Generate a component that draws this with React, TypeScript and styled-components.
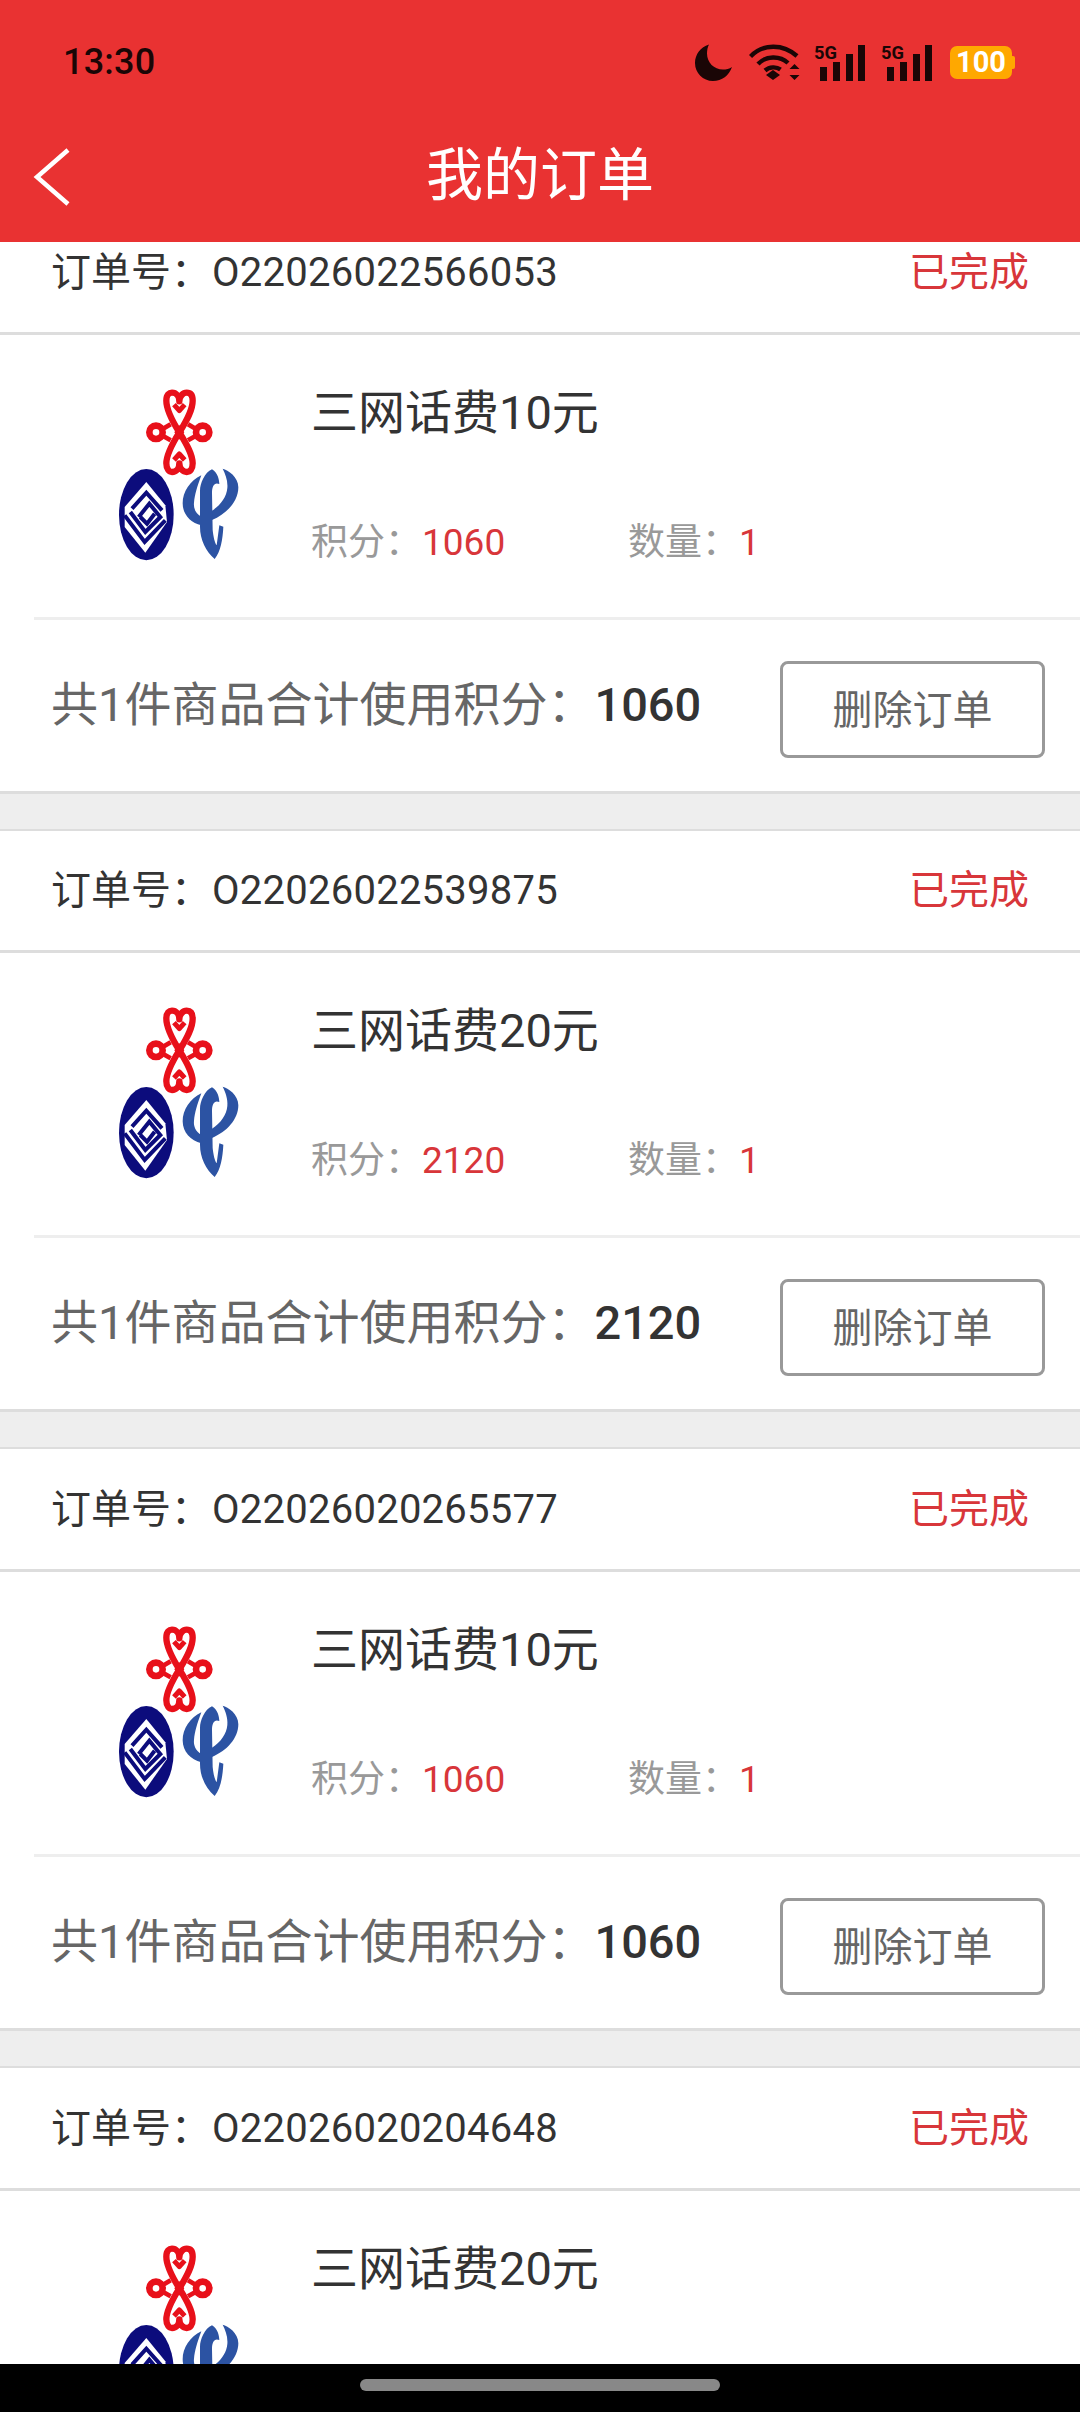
import styled, { createGlobalStyle } from "styled-components";

const GlobalStyle = createGlobalStyle`
  html, body {
    margin: 0;
    padding: 0;
    background: #eee;
  }
  * {
    box-sizing: border-box;
  }
`;

const FONT = `Roboto, "Noto Sans CJK SC", sans-serif`;
const RED = "#d8363a";

const Page = styled.div`
  width: 1080px;
  height: 2412px;
  display: flex;
  flex-direction: column;
  overflow: hidden;
  font-family: ${FONT};
  background: #eee;
`;

const Header = styled.header`
  height: 242px;
  flex-shrink: 0;
  background: #e93232;
  display: flex;
  flex-direction: column;
  position: relative;
  z-index: 1;
`;

const StatusBar = styled.div`
  height: 124px;
  padding: 0 68px 0 63px;
  display: flex;
  align-items: center;
  justify-content: space-between;
`;

const Time = styled.span`
  font-size: 36px;
  font-weight: 500;
  color: #1a0606;
  letter-spacing: 0.2px;
`;

const StatusIcons = styled.div`
  display: flex;
  align-items: center;
`;

const NavBar = styled.div`
  height: 118px;
  display: flex;
  align-items: center;
  justify-content: center;
  position: relative;
`;

const BackIcon = styled.svg`
  position: absolute;
  left: 31px;
  top: 22px;
`;

const Title = styled.h1`
  margin: 0 0 26px;
  font-size: 57px;
  font-weight: 400;
  color: #fff;
`;

const Viewport = styled.main`
  flex: 1;
  overflow: hidden;
`;

const OrderList = styled.div`
  margin-top: -32px;
`;

const OrderCard = styled.section`
  background: #fff;
  border-top: 2px solid #ddd;
  border-bottom: 3px solid #ddd;
  margin-bottom: 35.2px;
`;

const OrderHead = styled.div`
  height: 122.5px;
  padding: 0 51px 6px 51px;
  border-bottom: 3px solid #ddd;
  display: flex;
  align-items: center;
  justify-content: space-between;
  font-size: 40px;
`;

const OrderNo = styled.span`
  color: #333;
`;

const OrderDigits = styled.span`
  letter-spacing: 0.25px;
  margin-left: 1px;
`;

const OrderState = styled.span`
  color: ${RED};
`;

const Product = styled.div`
  height: 282px;
  padding: 25px 0 0 90px;
  display: flex;
`;

const Info = styled.div`
  margin-left: 41px;
  padding-top: 25px;
  display: flex;
  flex-direction: column;
`;

const ProductName = styled.div`
  font-size: 47px;
  line-height: 56px;
  color: #333;
`;

const Meta = styled.div`
  margin-top: 77px;
  display: flex;
  font-size: 37px;
  line-height: 50px;
`;

const MetaItem = styled.div<{ $width?: number }>`
  width: ${({ $width }) => ($width ? `${$width}px` : "auto")};
  color: #999;
`;

const MetaValue = styled.span`
  color: ${RED};
`;

const Footer = styled.div`
  margin-left: 34px;
  height: 174px;
  padding: 0 35px 0 17px;
  border-top: 3px solid #eee;
  display: flex;
  align-items: center;
  justify-content: space-between;
`;

const Total = styled.div`
  font-size: 47px;
  color: #666;
  margin-bottom: 10px;
`;

const TotalPoints = styled.span`
  color: #333;
  font-weight: 500;
`;

const DeleteButton = styled.button`
  width: 265px;
  height: 97px;
  margin-top: 8px;
  padding: 0 0 5px;
  border: 3px solid #999;
  border-radius: 8px;
  background: #fff;
  color: #666;
  font-family: ${FONT};
  font-size: 40px;
`;

const HomeBar = styled.div`
  height: 48px;
  flex-shrink: 0;
  background: #000;
  display: flex;
  justify-content: center;
  padding-top: 15px;
  position: relative;
  z-index: 1;
`;

const HomePill = styled.div`
  width: 360px;
  height: 12px;
  border-radius: 6px;
  background: #888;
`;

const MoonSvg = styled.svg`
  margin-right: 17px;
`;

const WifiSvg = styled.svg`
  margin-right: 13px;
`;

const SignalSvg = styled.svg<{ $gap: number }>`
  margin-right: ${({ $gap }) => $gap}px;
  overflow: visible;
`;

const Battery = styled.div`
  width: 62px;
  height: 33px;
  border-radius: 7px;
  background: #ffa800;
  color: #fff;
  font-size: 29px;
  font-weight: 700;
  line-height: 33px;
  text-align: center;
  position: relative;
  &::after {
    content: "";
    position: absolute;
    right: -3px;
    top: 10px;
    width: 3px;
    height: 13px;
    border-radius: 0 2px 2px 0;
    background: #ffa800;
  }
`;

const LogoSvg = styled.svg`
  flex-shrink: 0;
  display: block;
`;

const DARK = "#1a0606";

function Moon() {
  return (
    <MoonSvg width="37" height="37" viewBox="0 0 37 37">
      <path
        fill={DARK}
        d="M14 0.5C5.5 3 0 10.5 0 19c0 10 8 18 18 18 9 0 16-5.5 19-14-2.5 1.8-6 2.6-9 2.6-9 0-16-7-16-16 0-3.3 .6-6.4 2-9.1z"
      />
    </MoonSvg>
  );
}

function Wifi() {
  return (
    <WifiSvg width="52" height="36" viewBox="0 0 52 36">
      <g fill="none" stroke={DARK} strokeWidth="4.4">
        <path d="M1.5 12.5C14 -0.5 34 -0.5 48 12" />
        <path d="M9 20C17 11.5 31 11.5 39 19" />
        <path d="M16 26.5C20.5 22.5 27.5 22.5 31.5 25.5" />
      </g>
      <path fill={DARK} d="M24 26l7 5-7 5-7-5z" />
      <path fill={DARK} d="M45.5 20l5 5h-10zM45.5 36l-5-5h10z" />
    </WifiSvg>
  );
}

function Signal({ gap }: { gap: number }) {
  return (
    <SignalSvg $gap={gap} width="51" height="37" viewBox="0 0 51 37">
      <text x="0" y="15" fontFamily="Roboto" fontWeight="700" fontSize="18" textLength="23" lengthAdjust="spacingAndGlyphs" fill={DARK}>
        5G
      </text>
      <rect x="6" y="23" width="7" height="14" fill={DARK} />
      <rect x="19" y="18" width="7" height="19" fill={DARK} />
      <rect x="32" y="10" width="7" height="27" fill={DARK} />
      <rect x="44" y="1" width="7" height="36" fill={DARK} />
    </SignalSvg>
  );
}

// 三网 logo, coordinates are the crop of the product picture at 3x
function CarrierLogo() {
  return (
    <LogoSvg width="180" height="210" viewBox="0 0 540 630">
      {/* unicom knot */}
      <g fill="none" stroke="#e8101a" strokeWidth="19" strokeLinejoin="round">
        <path d="M268 217C245 180 229 150 229 122C229 104 238 98 246 98C258 98 268 108 268 124C268 108 280 98 290 98C300 98 308 104 308 122C308 150 291 180 268 217z" />
        <path d="M268 217C245 254 229 284 229 310C229 328 238 336 246 336C258 336 268 326 268 310C268 326 280 336 290 336C300 336 308 328 308 310C308 284 291 254 268 217z" />
        <circle cx="198" cy="217" r="20" strokeWidth="20" />
        <circle cx="338" cy="217" r="20" strokeWidth="20" />
        <path d="M218 207l24-14 M218 227l24 14 M318 207l-24-14 M318 227l-24 14" strokeWidth="14" />
        <path d="M252 134l16 18 16-18 M252 300l16-18 16 18" strokeWidth="15" />
      </g>
      <path d="M268 195l15 22-15 22-15-22z" fill="#e8101a" />
      {/* mobile */}
      <ellipse cx="169" cy="464" rx="82" ry="137" fill="#0c0c7c" />
      <path d="M169 366L226 436L231 486L166 578L104 501L104 441z" fill="#fff" />
      <g fill="none" stroke="#0c0c7c" strokeWidth="12" strokeLinejoin="miter">
        <path d="M126 446L169 398L216 451" />
        <path d="M146 471L178 431L211 471L166 516L121 456" />
        <path d="M151 471L171 491L194 461" />
        <path d="M104 466L164 546L226 481" />
      </g>
      {/* telecom */}
      <g fill="#2c53a3">
        <path d="M334 346C300 362 278 396 278 430C278 464 302 488 334 496L334 470C318 462 310 446 312 428C314 404 322 378 334 346z" />
        <path d="M398 326C414 330 445 350 445 382C445 424 410 462 366 480L366 452C392 436 410 410 412 384C414 362 406 342 398 326z" />
        <path d="M330 392C330 372 344 336 366 328C384 338 388 362 388 372C374 366 366 376 366 400L368 510C370 530 374 548 380 556L388 496L400 500C398 540 392 574 374 597C348 574 330 540 330 500z" />
      </g>
    </LogoSvg>
  );
}

interface Order {
  no: string;
  name: string;
  points: string;
}

const orders: Order[] = [
  { no: "O22026022566053", name: "三网话费10元", points: "1060" },
  { no: "O22026022539875", name: "三网话费20元", points: "2120" },
  { no: "O22026020265577", name: "三网话费10元", points: "1060" },
  { no: "O22026020204648", name: "三网话费20元", points: "2120" },
];

export default function App() {
  return (
    <Page>
      <GlobalStyle />
      <Header>
        <StatusBar>
          <Time>13:30</Time>
          <StatusIcons>
            <Moon />
            <Wifi />
            <Signal gap={16} />
            <Signal gap={18} />
            <Battery>100</Battery>
          </StatusIcons>
        </StatusBar>
        <NavBar>
          <BackIcon width="40" height="60" viewBox="0 0 40 60">
            <path d="M37 4L6 31L37 58" fill="none" stroke="#fff" strokeWidth="4.5" />
          </BackIcon>
          <Title>我的订单</Title>
        </NavBar>
      </Header>
      <Viewport>
        <OrderList>
          {orders.map((order) => (
            <OrderCard key={order.no}>
              <OrderHead>
                <OrderNo>
                  订单号：<OrderDigits>{order.no}</OrderDigits>
                </OrderNo>
                <OrderState>已完成</OrderState>
              </OrderHead>
              <Product>
                <CarrierLogo />
                <Info>
                  <ProductName>{order.name}</ProductName>
                  <Meta>
                    <MetaItem $width={317}>
                      积分：<MetaValue>{order.points}</MetaValue>
                    </MetaItem>
                    <MetaItem>
                      数量：<MetaValue>1</MetaValue>
                    </MetaItem>
                  </Meta>
                </Info>
              </Product>
              <Footer>
                <Total>
                  共1件商品合计使用积分：<TotalPoints>{order.points}</TotalPoints>
                </Total>
                <DeleteButton>删除订单</DeleteButton>
              </Footer>
            </OrderCard>
          ))}
        </OrderList>
      </Viewport>
      <HomeBar>
        <HomePill />
      </HomeBar>
    </Page>
  );
}
